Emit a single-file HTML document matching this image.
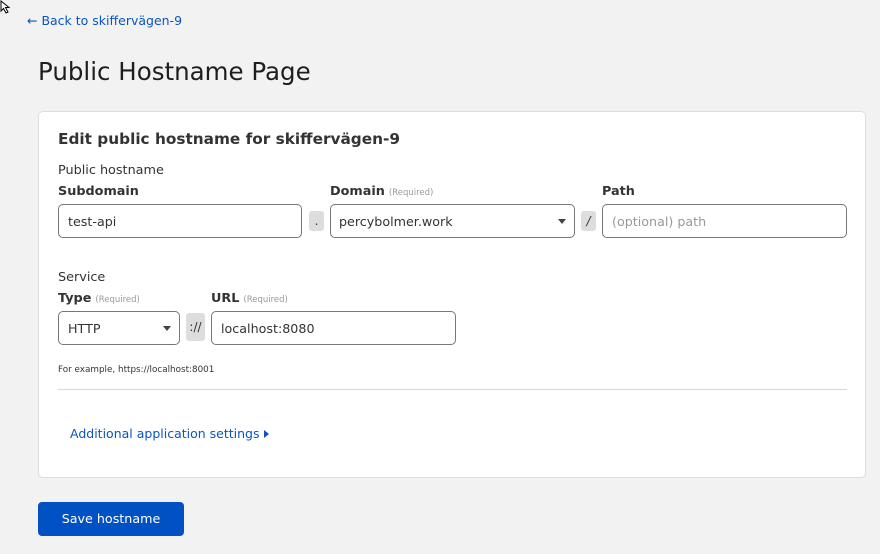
<!DOCTYPE html>
<html><head><meta charset="utf-8"><style>
*{box-sizing:border-box;margin:0;padding:0}
body{width:880px;height:554px;background:#f2f2f2;font-family:"DejaVu Sans","Liberation Sans",sans-serif;color:#222;position:relative;overflow:hidden}
.a{position:absolute;white-space:nowrap}
.blue{color:#0a55c2}
.lbl{font-weight:bold;font-size:12.8px;color:#333}
.req{font-weight:normal;font-size:8.5px;color:#999;margin-left:4px}
.inp{position:absolute;height:34px;border:1px solid #777;border-radius:5px;background:#fff;font-size:12.7px;line-height:34px;padding-left:9px;color:#333}
.sep{position:absolute;background:#ddd;border-radius:3px;font-size:12px;text-align:center;color:#333}
.caret{position:absolute;right:8px;top:14px;width:0;height:0;border-left:4px solid transparent;border-right:4px solid transparent;border-top:5px solid #444}
</style></head><body>
<svg class="a" style="left:0;top:0" width="12" height="14"><path d="M1 1 L1 11 L3.5 8.5 L6 13 L8 12 L5.5 7.5 L9 7.5 Z" fill="#fff" stroke="#000" stroke-width="1"/></svg>
<div class="a blue" style="left:27px;top:13px;font-size:12.5px">← Back to skiffervägen-9</div>
<div class="a" style="left:38px;top:57px;font-size:24.5px;color:#1e1e1e">Public Hostname Page</div>
<div class="a" style="left:38px;top:111px;width:828px;height:367px;background:#fff;border:1px solid #ddd;border-radius:5px"></div>
<div class="a" style="left:58px;top:130px;font-size:15.3px;font-weight:bold;color:#333">Edit public hostname for skiffervägen-9</div>
<div class="a" style="left:58px;top:163px;font-size:12.8px;color:#333">Public hostname</div>
<div class="a lbl" style="left:58px;top:184px">Subdomain</div>
<div class="a lbl" style="left:330px;top:184px">Domain<span class="req">(Required)</span></div>
<div class="a lbl" style="left:602px;top:184px">Path</div>
<div class="inp" style="left:58px;top:204px;width:244px">test-api</div>
<div class="sep" style="left:309px;top:211px;width:15px;height:20px;line-height:20px">.</div>
<div class="inp" style="left:330px;top:204px;width:245px;padding-left:8px">percybolmer.work<div class="caret"></div></div>
<div class="sep" style="left:581px;top:211px;width:15px;height:20px;line-height:20px;font-style:italic">/</div>
<div class="inp" style="left:602px;top:204px;width:245px;color:#999">(optional) path</div>
<div class="a" style="left:58px;top:270px;font-size:12.8px;color:#333">Service</div>
<div class="a lbl" style="left:58px;top:291px">Type<span class="req">(Required)</span></div>
<div class="a lbl" style="left:211px;top:291px">URL<span class="req">(Required)</span></div>
<div class="inp" style="left:58px;top:311px;width:122px">HTTP<div class="caret"></div></div>
<div class="sep" style="left:186px;top:313px;width:19px;height:28px;line-height:28px">://</div>
<div class="inp" style="left:211px;top:311px;width:245px">localhost:8080</div>
<div class="a" style="left:58px;top:365px;font-size:8.8px;color:#333">For example, https://localhost:8001</div>
<div class="a" style="left:58px;top:389px;width:789px;height:1px;background:#d9d9d9"></div>
<div class="a blue" style="left:70px;top:426px;font-size:12.5px">Additional application settings <span style="display:inline-block;width:0;height:0;border-top:4px solid transparent;border-bottom:4px solid transparent;border-left:5px solid #0a55c2;margin-left:1px"></span></div>
<div class="a" style="left:38px;top:502px;width:146px;height:34px;background:#0051c3;border-radius:4px;color:#fff;font-size:12.7px;text-align:center;line-height:34px">Save hostname</div>
</body></html>
